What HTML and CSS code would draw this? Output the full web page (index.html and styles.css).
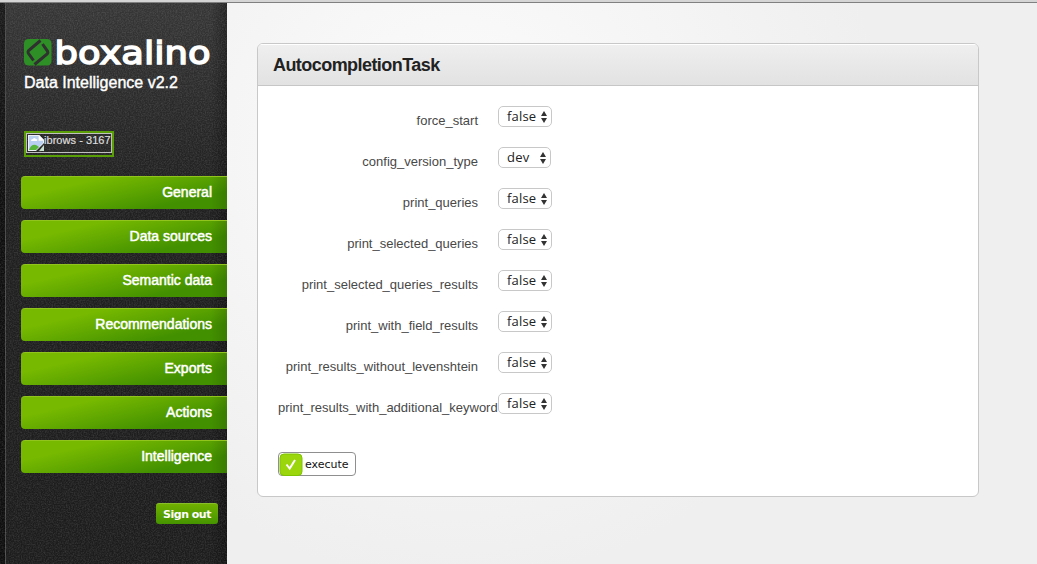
FILE: index.html
```html
<!DOCTYPE html>
<html lang="en">
<head>
<meta charset="utf-8">
<title>AutocompletionTask</title>
<link rel="stylesheet" href="styles.css">
</head>
<body>
<div class="topbar"></div>
<div class="app">
  <aside class="sidebar">
    <svg class="grain" width="227" height="561" aria-hidden="true">
      <filter id="noise" x="0" y="0" width="100%" height="100%">
        <feTurbulence type="fractalNoise" baseFrequency="0.75" numOctaves="2" seed="4"/>
        <feColorMatrix values="0 0 0 0 1  0 0 0 0 1  0 0 0 0 1  0.5 0 0 0 -0.17"/>
      </filter>
      <rect width="227" height="561" filter="url(#noise)"/>
    </svg>
    <div class="inner">
      <div class="logo">
        <svg class="mark" width="28" height="27" viewBox="0 0 28 27">
          <rect width="27.5" height="26.5" rx="4.5" fill="#2d8f25"/>
          <path d="M16.5 1.5 L4.6 11.6 Q3.6 12.7 4.2 14 L9.5 21.5 M18.5 5 L23.6 12.3 Q24.4 13.8 23.2 15 L10.5 25.5" fill="none" stroke="#303030" stroke-width="3"/>
        </svg>
        <svg class="word" width="156" height="30"><text x="-1.5" y="25" textLength="156" lengthAdjust="spacingAndGlyphs">boxalino</text></svg>
      </div>
      <div class="tagline">Data Intelligence v2.2</div>
      <div class="account"><span class="alt"><svg width="16" height="16" viewBox="0 0 16 16">
        <path d="M0 0H11L16 5V8L8 16H0Z" fill="#edf1f6"/><path d="M1 1H10.5V6H15V8L8 15H1Z" fill="#b9cff1"/>
        <path d="M11 0V5H16Z" fill="#fff"/><path d="M3 6Q3 4 5 4Q6 2 8 4Q10 4 9 6Z" fill="#fff"/>
        <path d="M1 15Q3 9 8 10L11 12L8 15Z" fill="#55b43a"/><path d="M16 10V16H11Z" fill="#c9dfcf"/></svg>ibrows - 3167</span></div>
      <nav class="menu">
        <a>General</a><a>Data sources</a><a>Semantic data</a><a>Recommendations</a><a>Exports</a><a>Actions</a><a>Intelligence</a>
      </nav>
      <button class="signout">Sign out</button>
    </div>
  </aside>
  <main class="content">
    <section class="panel">
      <h1>AutocompletionTask</h1>
      <form class="form">
        <div class="row"><label>force_start</label><span class="select">false<i class="arrows"></i></span></div>
        <div class="row"><label>config_version_type</label><span class="select dev">dev<i class="arrows"></i></span></div>
        <div class="row"><label>print_queries</label><span class="select">false<i class="arrows"></i></span></div>
        <div class="row"><label>print_selected_queries</label><span class="select">false<i class="arrows"></i></span></div>
        <div class="row"><label>print_selected_queries_results</label><span class="select">false<i class="arrows"></i></span></div>
        <div class="row"><label>print_with_field_results</label><span class="select">false<i class="arrows"></i></span></div>
        <div class="row"><label>print_results_without_levenshtein</label><span class="select">false<i class="arrows"></i></span></div>
        <div class="row"><label class="long">print_results_with_additional_keyword</label><span class="select">false<i class="arrows"></i></span></div>
        <button type="button" class="execute"><svg width="24" height="23" viewBox="0 0 24 23"><rect x="1" y="1" width="22" height="21.5" rx="4" fill="#9bd60c" stroke="#7fc400"/><path d="M7.5 11.5L10.7 15.5L16 7" fill="none" stroke="#fff" stroke-width="2"/></svg><span>execute</span></button>
      </form>
    </section>
  </main>
</div>
</body>
</html>
```
FILE: styles.css
```css
* { box-sizing: border-box; }
body { margin: 0; height: 564px; overflow: hidden; font-family: "Liberation Sans", Arial, sans-serif; }
.topbar { height: 3px; background: #d5d5d5; border-bottom: 1px solid #808080; }
.app { display: flex; height: 561px; }
.sidebar { position: relative; width: 227px; flex: none; overflow: hidden; background: linear-gradient(90deg, #0008 0 5px, #484848 5px 6px, transparent 6px 211px, #0005), linear-gradient(#363636, #202020 190px, #1c1c1c); }
.grain { position: absolute; inset: 0; opacity: .45; }
.inner { position: relative; display: flex; flex-direction: column; padding: 36px 0 0 24px; }
.logo { display: flex; height: 32px; }
.mark { margin-right: 4px; flex: none; }
.word { flex: none; overflow: visible; }
.word text { font: 32px "DejaVu Sans", sans-serif; fill: #fff; stroke: #fff; stroke-width: 1.5px; }
.tagline { height: 24px; line-height: 24px; font-size: 16px; color: #fff; -webkit-text-stroke: .4px #fff; white-space: nowrap; }
.account { width: 90px; height: 26px; margin-top: 36px; padding: 0; border: 2px solid #5a9e07; }
.alt { display: flex; width: 86px; height: 20px; padding: 0 1px; border: 1px solid #c0c0c0; color: #ddd; font-size: 11px; line-height: 13px; letter-spacing: .05px; white-space: nowrap; -webkit-text-stroke: .2px #ddd; }
.alt svg { flex: none; margin: 1px 0 0 0; }
.menu { display: flex; flex-direction: column; gap: 11px; margin: 19px 0 0 -3px; }
.menu a { height: 33px; padding-right: 15px; border-radius: 4px 0 0 4px; border-top: 1px solid #91c51e; background: linear-gradient(90deg, transparent 190px, #0002), linear-gradient(167deg, #77b900 25%, #429000 78%); color: #fff; font-size: 14px; line-height: 31px; text-align: right; -webkit-text-stroke: .5px #fff; }
.signout { align-self: flex-end; width: 62px; height: 21px; margin: 30px 9px 0 0; padding: 0; border: 0; border-top: 1px solid #88bd2b; border-radius: 3px; background: linear-gradient(#70b000, #459400); color: #fff; font: bold 11px "DejaVu Sans", Verdana, sans-serif; letter-spacing: -.5px; }
.content { flex: 1; padding: 40px 0 0 30px; background: radial-gradient(circle at 230px 150px, #fcfcfc, #efefef 430px); }
.panel { width: 722px; height: 454px; border: 1px solid #c8c8c8; border-radius: 6px; background: #fff; overflow: hidden; }
h1 { height: 42px; margin: 0; padding-left: 15px; border-bottom: 1px solid #c6c6c6; background: linear-gradient(#efefef, #e2e2e2); box-shadow: inset 0 1px #fff; color: #222; font-size: 18px; line-height: 42px; letter-spacing: -.56px; }
.form { padding: 20px 0 0 20px; }
.row { display: flex; height: 41px; }
label { width: 200px; margin-right: 20px; flex: none; padding-top: 7px; color: #484848; font-size: 13px; line-height: 15px; text-align: right; white-space: nowrap; }
.long { width: 220px; margin-right: 0; text-align: left; }
.select { position: relative; width: 54px; height: 21px; padding-left: 8px; border: 1px solid #c8c8c8; border-radius: 5px; background: #fff; color: #222; font: 13px/19px "Open Sans", sans-serif; letter-spacing: .2px; }
.dev { width: 53px; }
.arrows { position: absolute; right: 4px; top: 4px; width: 6px; height: 12px; display: flex; flex-direction: column; justify-content: space-between; }
.arrows::before, .arrows::after { content: ""; border: 3px solid transparent; }
.arrows::before { border-top: 0; border-bottom: 5px solid #333; }
.arrows::after { border-bottom: 0; border-top: 5px solid #333; }
.execute { display: flex; align-items: center; width: 78px; height: 24px; margin-top: 18px; padding: 0; border: 1px solid #8f8f8f; border-radius: 4px; background: #fff; color: #111; font: 11px "DejaVu Sans", Verdana, sans-serif; }
.execute svg { flex: none; margin-right: 2px; }
```
